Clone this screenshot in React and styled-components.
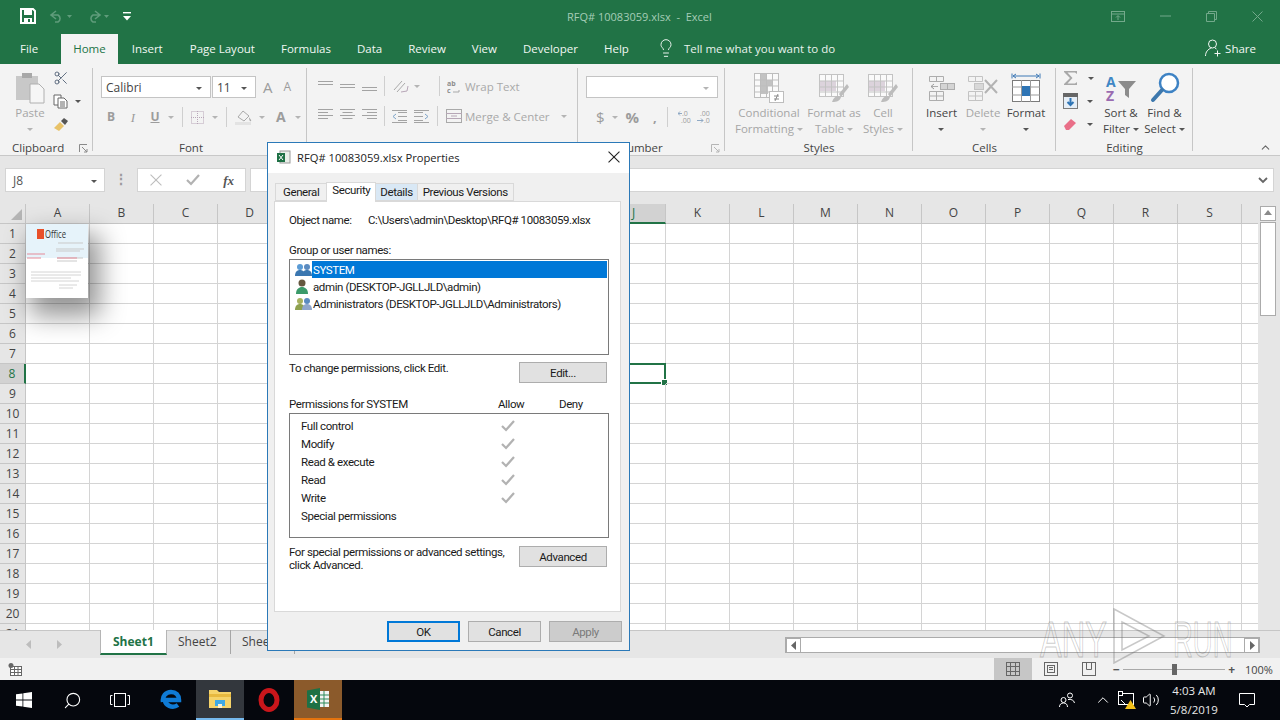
import React from "react";
import styled, { createGlobalStyle } from "styled-components";
import { Lightbulb, Scissors, Volume2, ChevronUp, Search } from "lucide-react";

const GlobalStyle = createGlobalStyle`
  html, body { margin: 0; padding: 0; width: 1280px; height: 720px; overflow: hidden; }
  body { font-family: "Open Sans", "Liberation Sans", sans-serif; font-size: 12px; color: #444; }
  * { box-sizing: border-box; }
`;

const Page = styled.div`
  position: relative;
  width: 1280px;
  height: 720px;
  display: flex;
  flex-direction: column;
  overflow: hidden;
  background: #e6e6e6;
`;

const TitleBar = styled.div`
  height: 32px;
  background: #217346;
  display: flex;
  align-items: center;
  padding-left: 20px;
  position: relative;
`;

const Qat = styled.div`
  display: flex;
  align-items: center;
  gap: 13px;
  width: 520px;
`;

const DocTitle = styled.div`
  width: 320px;
  padding-left: 27px;
  color: #a5cdb6;
  font-size: 11px;
  white-space: pre;
`;

const WinButtons = styled.div`
  margin-left: auto;
  display: flex;
  align-items: center;
  gap: 35px;
  padding-right: 17px;
`;

const TabBar = styled.div`
  height: 32px;
  background: #217346;
  display: flex;
  align-items: flex-end;
  padding-left: 4px;
  color: #fff;
  font-size: 11.5px;
`;

const Tab = styled.div`
  height: 30px;
  display: flex;
  align-items: center;
  padding: 0 ${(p) => p.$pad || 13}px 2px;
  margin-right: ${(p) => p.$mr || 0}px;
  background: ${(p) => (p.$active ? "#f3f3f3" : "transparent")};
  color: ${(p) => (p.$active ? "#217346" : "#f1f7f3")};
  white-space: nowrap;
`;

const TellMe = styled.div`
  display: flex;
  align-items: center;
  gap: 8px;
  height: 30px;
  padding: 0 0 2px 14px;
  color: #e8f2ec;
  white-space: nowrap;
`;

const Share = styled.div`
  margin-left: auto;
  display: flex;
  align-items: center;
  gap: 4px;
  height: 30px;
  padding: 0 24px 2px 0;
  color: #f1f7f3;
`;

const Ribbon = styled.div`
  height: 92px;
  background: #f3f3f3;
  border-bottom: 1px solid #c8c8c8;
  display: flex;
  position: relative;
`;

const Group = styled.div`
  width: ${(p) => p.$w}px;
  flex: none;
  display: flex;
  flex-direction: column;
  position: relative;
  padding-top: 6px;
  &::after {
    content: "";
    position: absolute;
    right: 0;
    top: 4px;
    bottom: 4px;
    width: 1px;
    background: ${(p) => (p.$last ? "transparent" : "#c6c6c6")};
  }
`;

const GroupBody = styled.div`
  flex: 1;
  display: flex;
  padding-left: ${(p) => p.$pl || 0}px;
  min-height: 0;
`;

const GroupLabel = styled.div`
  height: 15px;
  margin-bottom: -1px;
  line-height: 14px;
  font-size: 11.5px;
  color: #444;
  text-align: ${(p) => (p.$left ? "left" : "center")};
  padding-left: ${(p) => p.$pl || 0}px;
  padding-right: ${(p) => p.$pr || 0}px;
  position: relative;
`;

const Launcher = styled.svg`
  position: absolute;
  right: ${(p) => p.$r || 3}px;
  top: 3px;
`;

const Large = styled.div`
  width: ${(p) => p.$w}px;
  flex: none;
  display: flex;
  flex-direction: column;
  align-items: center;
  color: ${(p) => (p.$dim ? "#a6a6a6" : "#444")};
`;

const LargeIcon = styled.div`
  height: 35px;
  display: flex;
  align-items: center;
  justify-content: center;
`;

const LargeText = styled.div`
  font-size: 11.5px;
  line-height: 16px;
  text-align: center;
  white-space: nowrap;
`;

const Caret = styled.span`
  display: inline-block;
  width: 0;
  height: 0;
  border-left: 3px solid transparent;
  border-right: 3px solid transparent;
  border-top: 3px solid ${(p) => (p.$dim ? "#b4b4b4" : "#555")};
  margin-left: ${(p) => p.$ml ?? 3}px;
  margin-right: ${(p) => p.$mr ?? 0}px;
  vertical-align: middle;
`;

const SmallCol = styled.div`
  width: ${(p) => p.$w}px;
  flex: none;
  display: flex;
  flex-direction: column;
  gap: 3px;
  margin-top: -2px;
  padding-left: ${(p) => p.$pl || 0}px;
`;

const IconRow = styled.div`
  display: flex;
  align-items: center;
  gap: ${(p) => p.$gap ?? 4}px;
  height: ${(p) => p.$h || 20}px;
  margin-top: ${(p) => p.$mt || 0}px;
  color: ${(p) => (p.$dim ? "#a9a9a9" : "#444")};
  white-space: nowrap;
  font-size: 11.5px;
`;

const Combo = styled.div`
  width: ${(p) => p.$w}px;
  height: 22px;
  flex: none;
  background: #fff;
  border: 1px solid #c4c4c4;
  margin-left: ${(p) => p.$ml ?? 0}px;
  display: flex;
  align-items: center;
  padding: 0 4px;
  font-size: 12px;
  color: #444;
  span:last-child { margin-left: auto; margin-right: 2px; }
`;

const Divider = styled.div`
  width: 1px;
  height: ${(p) => p.$h || 20}px;
  flex: none;
  background: #cfcfcf;
  margin: 0 ${(p) => p.$m ?? 4}px;
`;

const Spacer = styled.span`
  width: ${(p) => p.$w}px;
  flex: none;
`;

const StackV = styled.div`
  display: flex;
  flex-direction: column;
  flex: 1;
  padding-top: 6px;
`;

const Glyph = styled.span`
  font-size: ${(p) => p.$s || 14}px;
  font-weight: ${(p) => p.$w || 400};
  font-style: ${(p) => (p.$i ? "italic" : "normal")};
  text-decoration: ${(p) => (p.$u ? "underline" : "none")};
  color: ${(p) => p.$c || "#9c9c9c"};
  font-family: ${(p) => (p.$serif ? '"Liberation Serif", serif' : '"Open Sans", sans-serif')};
  line-height: 1;
  width: ${(p) => (p.$box ? `${p.$box}px` : "auto")};
  margin-left: ${(p) => p.$ml || 0}px;
  text-align: center;
  flex: none;
`;

const FormulaBar = styled.div`
  height: 48px;
  background: #e6e6e6;
  display: flex;
  align-items: flex-start;
  padding: 12px 6px 0 5px;
`;

const NameBox = styled.div`
  width: 100px;
  height: 24px;
  background: #fff;
  border: 1px solid #d4d4d4;
  display: flex;
  align-items: center;
  padding: 0 7px;
  font-size: 12px;
  color: #555;
  span { margin-left: auto; }
`;

const Grip = styled.div`
  width: 32px;
  text-align: center;
  color: #9b9b9b;
  font-size: 14px;
  line-height: 22px;
  font-weight: 700;
`;

const FxBox = styled.div`
  width: 109px;
  height: 24px;
  background: #fff;
  border: 1px solid #d4d4d4;
  display: flex;
  align-items: center;
  justify-content: space-between;
  padding: 0 11px 0 12px;
`;

const FormulaInput = styled.div`
  flex: 1;
  height: 24px;
  margin-left: 4px;
  background: #fff;
  border: 1px solid #d4d4d4;
  display: flex;
  align-items: center;
  justify-content: flex-end;
  padding-right: 5px;
`;

const SheetArea = styled.div`
  height: 426px;
  display: flex;
  background: #fff;
`;

const Cells = styled.div`
  width: 1258px;
  overflow: hidden;
`;

const GridRow = styled.div`
  display: flex;
  height: 20px;
`;

const Corner = styled.div`
  width: 26px;
  flex: none;
  background: #e6e6e6;
  border-right: 1px solid #c6c6c6;
  border-bottom: 1px solid #c6c6c6;
  position: relative;
  &::after {
    content: "";
    position: absolute;
    right: 3px;
    bottom: 3px;
    border-left: 11px solid transparent;
    border-bottom: 11px solid #b5b5b5;
  }
`;

const ColHead = styled.div`
  width: 64px;
  flex: none;
  background: ${(p) => (p.$on ? "#d2d2d2" : "#e6e6e6")};
  border-right: 1px solid #c6c6c6;
  border-bottom: ${(p) => (p.$on ? "2px solid #217346" : "1px solid #c6c6c6")};
  color: ${(p) => (p.$on ? "#217346" : "#444")};
  text-align: center;
  line-height: 18px;
  font-size: 12px;
`;

const RowHead = styled.div`
  width: 26px;
  flex: none;
  background: ${(p) => (p.$on ? "#d2d2d2" : "#e6e6e6")};
  border-right: ${(p) => (p.$on ? "2px solid #217346" : "1px solid #c6c6c6")};
  border-bottom: 1px solid #c6c6c6;
  color: ${(p) => (p.$on ? "#217346" : "#444")};
  text-align: center;
  line-height: 19px;
  font-size: 12px;
`;

const Cell = styled.div`
  width: 64px;
  flex: none;
  border-right: 1px solid #d4d4d4;
  border-bottom: 1px solid #d4d4d4;
  position: relative;
  ${(p) =>
    p.$selected &&
    `
    &::before {
      content: "";
      position: absolute;
      inset: -1px;
      border: 2px solid #217346;
    }
    &::after {
      content: "";
      position: absolute;
      right: -3px;
      bottom: -3px;
      width: 5px;
      height: 5px;
      background: #217346;
      border: 1px solid #fff;
    }
  `}
`;

const VScroll = styled.div`
  width: 22px;
  flex: none;
  background: #e6e6e6;
  padding: 2px 2px 0 2px;
  display: flex;
  flex-direction: column;
  height: 100%;
`;

const ScrollBtn = styled.div`
  width: ${(p) => p.$w || 16}px;
  height: 15px;
  flex: none;
  background: #fff;
  border: 1px solid #ababab;
  display: flex;
  align-items: center;
  justify-content: center;
`;

const VThumb = styled.div`
  width: 16px;
  height: 94px;
  background: #fff;
  border: 1px solid #ababab;
  margin-top: 1px;
`;

const VFill = styled.div`
  flex: 1;
`;

const SheetBar = styled.div`
  height: 28px;
  background: #e6e6e6;
  border-top: 1px solid #c6c6c6;
  display: flex;
  align-items: flex-start;
  position: relative;
`;

const SheetNav = styled.div`
  width: 100px;
  height: 26px;
  display: flex;
  align-items: center;
  gap: 22px;
  padding-left: 25px;
`;

const SheetTab = styled.div`
  width: ${(p) => p.$w}px;
  height: ${(p) => (p.$active ? 25 : 24)}px;
  background: ${(p) => (p.$active ? "#fff" : "transparent")};
  border-left: ${(p) => (p.$active ? "1px solid #b5b5b5" : "none")};
  border-right: 1px solid ${(p) => (p.$active ? "#b5b5b5" : "#a6a6a6")};
  border-bottom: ${(p) => (p.$active ? "2px solid #217346" : "none")};
  color: ${(p) => (p.$active ? "#217346" : "#444")};
  font-weight: ${(p) => (p.$active ? 700 : 400)};
  font-size: 12px;
  line-height: 24px;
  padding-left: ${(p) => (p.$active ? 12 : 11)}px;
  margin-top: -1px;
  white-space: nowrap;
  overflow: hidden;
`;

const HScroll = styled.div`
  position: absolute;
  left: 785px;
  top: 6px;
  width: 475px;
  height: 16px;
  background: #fff;
  border: 1px solid #ababab;
  display: flex;
  justify-content: space-between;
`;

const StatusBar = styled.div`
  height: 22px;
  background: #f1f1f1;
  display: flex;
  align-items: center;
  padding-left: 8px;
`;

const ViewButtons = styled.div`
  margin-left: auto;
  display: flex;
  height: 100%;
  align-items: center;
`;

const ViewBtn = styled.div`
  width: 38px;
  height: 22px;
  display: flex;
  align-items: center;
  justify-content: center;
  background: ${(p) => (p.$on ? "#c6c6c6" : "transparent")};
`;

const ZoomBar = styled.div`
  width: 125px;
  margin-left: 3px;
  padding: 0 1px 0 2px;
  display: flex;
  align-items: center;
  color: #555;
  font-weight: 700;
`;

const ZoomTrack = styled.div`
  flex: 1;
  height: 1px;
  margin: 0 3px;
  background: #a9a9a9;
  position: relative;
`;

const ZoomThumb = styled.div`
  position: absolute;
  left: 49px;
  top: -5px;
  width: 5px;
  height: 11px;
  background: #666;
`;

const ZoomValue = styled.div`
  width: 44px;
  padding-left: 9px;
  font-size: 11px;
  color: #444;
`;

const Taskbar = styled.div`
  height: 40px;
  background: #05070d;
  display: flex;
  color: #fff;
`;

const TaskSlot = styled.div`
  width: ${(p) => p.$w || 48}px;
  margin-left: ${(p) => p.$ml || 0}px;
  height: 40px;
  flex: none;
  display: flex;
  align-items: center;
  justify-content: center;
  background: ${(p) => p.$bg || "transparent"};
  border-bottom: ${(p) => (p.$line ? `2px solid ${p.$line}` : "none")};
`;

const Tray = styled.div`
  margin-left: auto;
  display: flex;
  align-items: center;
  padding-right: 18px;
`;

const Clock = styled.div`
  width: 66px;
  margin-left: -2px;
  text-align: center;
  font-size: 11.5px;
  line-height: 19px;
  color: #e8e8e8;
`;

const Thumb = styled.svg`
  position: absolute;
  left: 26px;
  top: 224px;
  box-shadow: 8px 14px 26px 4px rgba(0, 0, 0, 0.42);
`;

const Watermark = styled.div`
  position: absolute;
  left: 1040px;
  top: 610px;
  width: 200px;
  height: 60px;
  display: flex;
  align-items: center;
  font-family: "Liberation Sans", sans-serif;
  font-size: 50px;
  color: transparent;
  -webkit-text-stroke: 1px rgba(110, 110, 110, 0.38);
  pointer-events: none;
  line-height: 60px;
`;

const WatermarkWord = styled.span`
  display: block;
  width: ${(p) => p.$w}px;
  flex: none;
  transform: scaleX(${(p) => p.$sx});
  transform-origin: left center;
`;

const WatermarkPlay = styled.svg`
  flex: none;
  margin: -8px 5px 0 0;
`;

const Dialog = styled.div`
  position: absolute;
  left: 267px;
  top: 142px;
  width: 363px;
  height: 509px;
  background: #f0f0f0;
  border: 1px solid #2b79b8;
  display: flex;
  flex-direction: column;
  font-family: Roboto, "Liberation Sans", sans-serif;
  font-size: 11.5px;
  letter-spacing: -0.4px;
  color: #1a1a1a;
`;

const DialogTitle = styled.div`
  height: 30px;
  background: #fff;
  display: flex;
  align-items: center;
  gap: 6px;
  padding: 0 9px 2px;
  flex: none;
  font-family: "Open Sans", sans-serif;
  letter-spacing: 0;
  font-size: 11.2px;
  color: #222;
  svg:last-child { margin-left: auto; }
`;

const DialogTabs = styled.div`
  height: 28px;
  padding: 10px 0 0 7px;
  display: flex;
  align-items: flex-end;
  flex: none;
`;

const DialogTab = styled.div`
  height: ${(p) => (p.$active ? 20 : 18)}px;
  padding: 0 ${(p) => p.$pad || 4}px;
  margin-left: ${(p) => (p.$first ? 0 : -1)}px;
  background: ${(p) => (p.$active ? "#fff" : p.$hover ? "#d9e8f5" : "#f0f0f0")};
  border: 1px solid #d9d9d9;
  border-bottom: ${(p) => (p.$active ? "none" : "1px solid #d9d9d9")};
  line-height: ${(p) => (p.$active ? 15 : 17)}px;
  position: relative;
  z-index: ${(p) => (p.$active ? 1 : 0)};
  margin-bottom: ${(p) => (p.$active ? -1 : 0)}px;
`;

const Panel = styled.div`
  width: 347px;
  height: 411px;
  margin-left: 6px;
  background: #fff;
  border: 1px solid #d9d9d9;
  padding: 11px 14px 0 14px;
  flex: none;
`;

const LineText = styled.div`
  display: flex;
  height: 15px;
  line-height: 15px;
  margin-top: ${(p) => p.$mt || 0}px;
  white-space: nowrap;
`;

const ObjectLabel = styled.div`
  width: 79px;
  flex: none;
`;

const ListBox = styled.div`
  width: 320px;
  height: ${(p) => p.$h}px;
  border: 1px solid #7a7a7a;
  padding: ${(p) => p.$pad || "1px"};
  margin-top: ${(p) => p.$mt || 0}px;
  background: #fff;
`;

const UserRow = styled.div`
  height: 17px;
  display: flex;
  align-items: center;
  padding-left: 4px;
  white-space: nowrap;
  color: #1a1a1a;
`;

const UserName = styled.span`
  flex: 1;
  height: 17px;
  line-height: 18px;
  padding-left: 1px;
  background: ${(p) => (p.$sel ? "#0078d7" : "transparent")};
  color: ${(p) => (p.$sel ? "#fff" : "#1a1a1a")};
`;

const ActionRow = styled.div`
  display: flex;
  justify-content: space-between;
  align-items: flex-start;
  width: 318px;
  margin-top: ${(p) => p.$mt || 0}px;
`;

const ActionText = styled.div`
  line-height: 13px;
  white-space: nowrap;
`;

const Btn = styled.div`
  width: ${(p) => p.$w || 73}px;
  height: ${(p) => p.$h || 21}px;
  background: ${(p) => (p.$disabled ? "#cccccc" : "#e1e1e1")};
  border: ${(p) => (p.$primary ? "2px solid #0078d7" : "1px solid #adadad")};
  color: ${(p) => (p.$disabled ? "#7a7a7a" : "#1a1a1a")};
  display: flex;
  align-items: center;
  justify-content: center;
  flex: none;
`;

const PermHead = styled.div`
  display: grid;
  grid-template-columns: 209px 61px auto;
  height: 15px;
  line-height: 15px;
  margin-top: 14px;
`;

const PermRow = styled.div`
  display: grid;
  grid-template-columns: 200px 20px;
  height: 18px;
  align-items: center;
  padding-left: 11px;
`;

const DialogFoot = styled.div`
  display: flex;
  justify-content: flex-end;
  gap: 8px;
  padding: 9px 7px 0 0;
`;

const Arrow = ({ dir = "right", c = "#8a8a8a" }) => (
  <svg width="8" height="9" viewBox="0 0 8 9">
    <path d={dir === "right" ? "M2 0l5 4.5L2 9z" : dir === "left" ? "M6 0L1 4.5 6 9z" : dir === "up" ? "M0 6l4-5 4 5z" : "M0 2l4 5 4-5z"} fill={c} />
  </svg>
);

const SaveIcon = () => (
  <svg width="16" height="16" viewBox="0 0 16 16">
    <path d="M1 1h12l2 2v12H1z" fill="none" stroke="#fff" strokeWidth="2" />
    <rect x="4" y="2" width="8" height="5" fill="#fff" />
    <rect x="4" y="10" width="8" height="5" fill="#fff" />
    <rect x="8" y="11" width="2" height="3" fill="#217346" />
  </svg>
);

const UndoIcon = ({ redo }) => (
  <svg width="24" height="14" viewBox="0 0 24 14">
    <path d={redo ? "M9 2l5 4-5 4M14 6H7a4 4 0 0 0 0 7h3" : "M7 2L2 6l5 4M2 6h7a4 4 0 0 1 0 7H6"} fill="none" stroke="#5f9c7b" strokeWidth="1.6" />
    <path d="M18 6h5l-2.5 3z" fill="#5f9c7b" />
  </svg>
);

const CustomizeIcon = () => (
  <svg width="8" height="9" viewBox="0 0 8 9">
    <rect x="0" y="0" width="8" height="1.4" fill="#fff" />
    <path d="M0 4h8L4 8.500z" fill="#fff" />
  </svg>
);

const ShareIcon = () => (
  <svg width="16" height="18" viewBox="0 0 16 18" fill="none" stroke="#f1f7f3">
    <circle cx="7.500" cy="5" r="4" />
    <path d="M0.500 17c0-4 2.500-7 6-8M10 9l1.500 1M12.500 11.500v6M9.500 14.500h6" />
  </svg>
);

const RibbonDisplayIcon = () => (
  <svg width="14" height="11" viewBox="0 0 14 11" fill="none" stroke="#73a98b">
    <rect x="0.5" y="0.5" width="13" height="10" />
    <path d="M0.5 3h13M7 9V5M5 6.500L7 4.500l2 2" />
  </svg>
);

const MinIcon = () => (
  <svg width="11" height="2" viewBox="0 0 11 2">
    <path d="M0 1h11" stroke="#73a98b" />
  </svg>
);

const RestoreIcon = () => (
  <svg width="11" height="11" viewBox="0 0 11 11" fill="none" stroke="#73a98b">
    <path d="M2.500 2.500v-2h8v8h-2M0.500 2.500h8v8h-8z" />
  </svg>
);

const CloseIcon = ({ c = "#73a98b", s = 11 }) => (
  <svg width={s} height={s} viewBox="0 0 11 11" fill="none" stroke={c}>
    <path d="M0.500 0.500l10 10M10.500 0.500l-10 10" />
  </svg>
);

const PasteIcon = () => (
  <svg width="30" height="32" viewBox="0 0 30 32">
    <rect x="1" y="4" width="22" height="24" fill="#c8c8c8" />
    <rect x="7" y="1" width="10" height="5" fill="#a8a8a8" />
    <path d="M15 12h9l5 5v14H15z" fill="#f6f6f6" stroke="#b0b0b0" />
  </svg>
);

const CopyIcon = () => (
  <svg width="15" height="15" viewBox="0 0 15 15" fill="#fff" stroke="#666">
    <path d="M1 1h7v10H1z" />
    <path d="M5 4h6l3 3v7H5z" />
    <path d="M7 8h5M7 10h5M7 12h5" fill="none" />
  </svg>
);

const BrushIcon = () => (
  <svg width="16" height="16" viewBox="0 0 16 16">
    <path d="M1 12l6-6 4 4-5 5z" fill="#e8c268" />
    <path d="M8 5l3-3 4 3-3 4z" fill="#555" />
  </svg>
);

const BordersIcon = () => (
  <svg width="13" height="13" viewBox="0 0 13 13" fill="none" stroke="#b9a7b9" strokeDasharray="1 1">
    <rect x="0.500" y="0.500" width="12" height="12" />
    <path d="M6.500 0v13M0 6.500h13" />
  </svg>
);

const FillIcon = () => (
  <svg width="18" height="16" viewBox="0 0 18 16">
    <path d="M3 8l5-6 6 5-5 5z" fill="none" stroke="#a9a9a9" />
    <path d="M14 8c1 2 3 3 2 4s-2-1-2-4z" fill="#a9a9a9" />
    <rect x="0" y="13" width="16" height="3" fill="#e3e3e3" />
  </svg>
);

const AlignLines = ({ rows = [12, 12, 12], w = 15, anchor = "left", top = 0, gap = 3 }) => (
  <svg width={w} height={14} viewBox={`0 0 ${w} 14`} stroke="#a3a3a3">
    {rows.map((r, i) => {
      const x = anchor === "left" ? 0 : anchor === "right" ? w - r : (w - r) / 2;
      return <path key={i} d={`M${x} ${top + i * gap + 0.5}h${r}`} />;
    })}
  </svg>
);

const OrientIcon = () => (
  <svg width="18" height="16" viewBox="0 0 18 16" stroke="#a9a9a9" fill="none">
    <path d="M2 12L10 3M5 14L13 5" />
    <path d="M9 14l6-1 1-5" stroke="#b7a6b7" />
  </svg>
);

const WrapIcon = () => (
  <svg width="14" height="17" viewBox="0 0 14 17">
    <text x="0" y="8" fontSize="7" fontWeight="700" fontFamily="Open Sans, sans-serif" fill="#8e8e8e">ab</text>
    <text x="0" y="15" fontSize="7" fontWeight="700" fontFamily="Open Sans, sans-serif" fill="#8e8e8e">c</text>
    <path d="M6 14h6v-2" fill="none" stroke="#a9a9a9" />
  </svg>
);

const IndentIcon = ({ flip }) => (
  <svg width="15" height="13" viewBox="0 0 15 13" stroke="#a3a3a3" fill="none" style={flip ? { transform: "scaleX(-1)" } : undefined}>
    <path d="M6 2.500h9M6 6.500h9M6 10.500h9M0 12.500h15M0 0.500h15" />
    <path d="M4 4L1 6.500 4 9" stroke="#7fa4c8" />
  </svg>
);

const MergeIcon = () => (
  <svg width="16" height="14" viewBox="0 0 16 14" fill="none" stroke="#a9a9a9">
    <rect x="0.500" y="0.500" width="15" height="13" />
    <path d="M0 4.500h16M0 9.500h16M5 7h6" stroke="#b6a6b6" />
  </svg>
);

const DecimalIcon = ({ more }) => (
  <svg width="15" height="15" viewBox="0 0 15 15">
    <text x={more ? 3 : 4} y="6" fontSize="7" fontFamily="Open Sans, sans-serif" fill="#9c9c9c">{more ? ".00" : ".0"}</text>
    <text x={more ? 7 : 3} y="13" fontSize="7" fontFamily="Open Sans, sans-serif" fill="#9c9c9c">{more ? ".0" : ".00"}</text>
    <path d={more ? "M0 10.500h6M4 8.500l2 2-2 2" : "M0 3.500h4M2 1.500l-2 2 2 2"} fill="none" stroke="#8fa9c4" />
  </svg>
);

const CondFmtIcon = () => (
  <svg width="32" height="32" viewBox="0 0 32 32" fill="none" stroke="#bdbdbd">
    <rect x="1.500" y="1.500" width="24" height="24" fill="#fafafa" />
    <rect x="7" y="2" width="6" height="9" fill="#c2c2c2" stroke="none" />
    <rect x="7" y="8" width="12" height="6" fill="#c2c2c2" stroke="none" />
    <rect x="7" y="14" width="8" height="8" fill="#c2c2c2" stroke="none" />
    <path d="M1 8h25M1 14h25M1 20h25M7.500 1v25M13.500 1v25M19.500 1v25" />
    <rect x="16.500" y="19.500" width="14" height="11" fill="#fff" />
    <path d="M21 24h5M21 27h5M25 22l-3 7" stroke="#8c8c8c" />
  </svg>
);

const TableFmtIcon = () => (
  <svg width="32" height="30" viewBox="0 0 32 30" fill="none" stroke="#c3c3c3">
    <rect x="1.500" y="1.500" width="24" height="22" fill="#fafafa" />
    <rect x="2" y="8" width="16" height="10" fill="#dcd3dc" stroke="none" />
    <path d="M1 8h25M1 14h25M1 19h25M7.500 1v23M13.500 1v23M19.500 1v23" />
    <path d="M29 11l-8 10 2 3 8-10z" fill="#bcbcbc" stroke="none" />
    <path d="M14 29c2-6 6-7 9-5-1 4-4 5-9 5z" fill="#bcbcbc" stroke="none" />
  </svg>
);

const InsertCellsIcon = () => (
  <svg width="28" height="28" viewBox="0 0 28 28" fill="none" stroke="#adadad">
    <path d="M1.500 2.500h14v5h-14zM8.500 2v5M1.500 17.500h14v9h-14zM1 22h15M8.500 17v9" />
    <rect x="12.500" y="9.500" width="14" height="6" fill="#d4d4d4" />
    <path d="M19.500 9v6M10 12.500H3" />
    <path d="M6 10l-3 2.500 3 2.500" stroke="#999" />
  </svg>
);

const DeleteCellsIcon = () => (
  <svg width="32" height="28" viewBox="0 0 32 28" fill="none" stroke="#c3c3c3">
    <path d="M1.500 2.500h14v5h-14zM8.500 2v5M1.500 17.500h14v9h-14zM1 22h15M8.500 17v9" />
    <rect x="7.500" y="9.500" width="9" height="6" fill="#d8d8d8" />
    <path d="M18 6l12 13M30 6L18 19" stroke="#b3b3b3" strokeWidth="2" />
  </svg>
);

const FormatCellsIcon = () => (
  <svg width="30" height="32" viewBox="0 0 30 32" fill="none">
    <path d="M1 1.500v5M29 1.500v5M2 4h26" stroke="#3d78b5" />
    <path d="M5 2L2 4l3 2M25 2l3 2-3 2" stroke="#3d78b5" />
    <rect x="1.500" y="8.500" width="27" height="21" fill="#fff" stroke="#7b7b7b" />
    <path d="M1 15h28M1 23h28M10.500 8v22M19.500 8v22" stroke="#9b9b9b" />
    <rect x="11" y="14" width="8" height="10" fill="#2f75b5" />
  </svg>
);

const SumIcon = () => (
  <svg width="16" height="16" viewBox="0 0 16 16">
    <path d="M1 1h13v3L12 2.500H4.500l5 5.500-5 5.500H12l2-1.500v3H1v-1l6-6-6-6z" fill="#a8a8a8" />
  </svg>
);

const FillDownIcon = () => (
  <svg width="15" height="16" viewBox="0 0 15 16">
    <rect x="0.500" y="0.500" width="14" height="15" fill="#e5eef7" stroke="#7b7b7b" />
    <rect x="0" y="0" width="15" height="4" fill="#666" />
    <path d="M7.500 5v7M4.500 9l3 3 3-3" stroke="#2f75b5" strokeWidth="2" fill="none" />
  </svg>
);

const EraserIcon = () => (
  <svg width="14" height="14" viewBox="0 0 14 14">
    <path d="M1 9l7-7 5 4-7 7H3z" fill="#e96f88" />
  </svg>
);

const SortIcon = () => (
  <svg width="32" height="32" viewBox="0 0 32 32">
    <text x="1" y="15" fontSize="14" fontWeight="700" fontFamily="Open Sans, sans-serif" fill="#3f87c5">A</text>
    <text x="1" y="29" fontSize="14" fontWeight="700" fontFamily="Open Sans, sans-serif" fill="#9a6bb0">Z</text>
    <path d="M13 9h18l-7 8v9l-4-3v-6z" fill="#8c8c8c" />
  </svg>
);

const FindIcon = () => (
  <svg width="30" height="32" viewBox="0 0 30 32" fill="none">
    <circle cx="19" cy="11" r="9" stroke="#3d82c4" strokeWidth="2.500" fill="#fff" />
    <path d="M12 18L3 28" stroke="#3d78ad" strokeWidth="4" strokeLinecap="round" />
  </svg>
);

const PeopleIcon = () => (
  <svg width="16" height="16" viewBox="0 0 16 16" fill="none" stroke="#fff">
    <circle cx="11" cy="3.500" r="2.500" />
    <circle cx="4.500" cy="8" r="2.500" />
    <path d="M0.500 15c0-2.500 1.500-4 4-4s4 1.500 4 4M9 7.500c3-.5 6 .5 6.500 3.500" />
  </svg>
);

const DesktopIcon = ({ kind }) => {
  if (kind === "start") {
    return (
      <svg width="16" height="16" viewBox="0 0 16 16" fill="#fff">
        <path d="M0 2.300l6.500-.9v6.200H0zM7.300 1.300L16 0v7.600H7.300zM0 8.400h6.500v6.200L0 13.700zM7.300 8.400H16V16l-8.700-1.300z" />
      </svg>
    );
  }
  if (kind === "task") {
    return (
      <svg width="20" height="14" viewBox="0 0 20 14" fill="none" stroke="#fff">
        <rect x="4.500" y="0.500" width="11" height="13" />
        <path d="M2.500 2.500h-2v9h2M17.500 2.500h2v9h-2" />
      </svg>
    );
  }
  if (kind === "edge") {
    return (
      <svg width="22" height="22" viewBox="0 0 22 22" fill="none">
        <path d="M3 13c-1-6 3-10 8-10 5 0 8 3 8 8H5M5 11c0 5 7 9 13 5" stroke="#0f7bd6" strokeWidth="4.500" />
      </svg>
    );
  }
  if (kind === "folder") {
    return (
      <svg width="24" height="20" viewBox="0 0 24 20">
        <path d="M1 1h8l2 2h12v16H1z" fill="#f5d36a" />
        <rect x="1" y="5" width="22" height="3" fill="#e7b93f" />
        <rect x="7" y="11" width="10" height="6" fill="#3fa9e6" />
        <rect x="10" y="15" width="4" height="4" fill="#f7f1d6" />
      </svg>
    );
  }
  if (kind === "opera") {
    return (
      <svg width="22" height="24" viewBox="0 0 22 24" fill="none">
        <ellipse cx="11" cy="12" rx="8" ry="9.500" stroke="#c9161b" strokeWidth="5" />
      </svg>
    );
  }
  return (
    <svg width="24" height="22" viewBox="0 0 24 22">
      <path d="M1 2.500L14 0v22L1 19.500z" fill="#1e7145" />
      <rect x="14" y="3" width="9" height="16" fill="#f4f4f4" />
      <path d="M14 7h9M14 11h9M14 15h9M18 3v16" stroke="#2f8b5b" />
      <text x="4" y="15" fontSize="11" fontWeight="700" fontFamily="Open Sans, sans-serif" fill="#fff">X</text>
    </svg>
  );
};

const SecurityUser = ({ kind }) => (
  <svg width="17" height="15" viewBox="0 0 17 15">
    {kind === "admin" ? (
      <>
        <circle cx="7" cy="4" r="3.500" fill="#65573f" />
        <path d="M1 15c0-5 3-7 6-7s6 2 6 7z" fill="#3b9a6a" />
      </>
    ) : (
      <>
        <circle cx="5" cy="5" r="3" fill={kind === "system" ? "#5b9bd5" : "#a7b15f"} />
        <path d="M0 14c0-4 2-6 5-6s5 2 5 6z" fill={kind === "system" ? "#3b77b0" : "#8fa14f"} />
        <circle cx="12" cy="5" r="3" fill="#5b8bc0" />
        <path d="M7 14c0-4 2-6 5-6s5 2 5 6z" fill={kind === "system" ? "#3b77b0" : "#8fa6cc"} />
      </>
    )}
  </svg>
);

const GreyCheck = () => (
  <svg width="14" height="12" viewBox="0 0 14 12" fill="none">
    <path d="M1 6l4 4 8-9" stroke="#b2b2b2" strokeWidth="2.200" />
  </svg>
);

const XlsxIcon = () => (
  <svg width="14" height="14" viewBox="0 0 14 14">
    <rect x="3" y="1" width="10" height="12" fill="#e9efe9" stroke="#9a9a9a" />
    <rect x="0" y="3" width="8" height="9" fill="#1e7145" />
    <path d="M2 5l4 5M6 5l-4 5" stroke="#fff" />
  </svg>
);

const NormalViewIcon = () => (
  <svg width="14" height="14" viewBox="0 0 14 14" fill="none" stroke="#666">
    <rect x="0.500" y="0.500" width="13" height="13" />
    <path d="M4.500 0v14M9.500 0v14M0 4.500h14M0 9.500h14" />
  </svg>
);

const PageViewIcon = () => (
  <svg width="14" height="14" viewBox="0 0 14 14" fill="none" stroke="#666">
    <rect x="0.500" y="0.500" width="13" height="13" />
    <rect x="3.500" y="3.500" width="7" height="7" />
    <path d="M5 5.500h4M5 7.500h4" />
  </svg>
);

const BreakViewIcon = () => (
  <svg width="14" height="14" viewBox="0 0 14 14" fill="none" stroke="#666">
    <rect x="0.500" y="0.500" width="13" height="13" />
    <path d="M4.500 0v7.500h5V0" />
  </svg>
);

const MacroIcon = () => (
  <svg width="14" height="13" viewBox="0 0 14 13" fill="none" stroke="#666">
    <rect x="2.500" y="3.500" width="11" height="9" fill="#fff" />
    <path d="M2 6.500h12M2 9.500h12M6.500 3v10M10 3v10" />
    <circle cx="3" cy="2.500" r="2.500" fill="#666" stroke="none" />
  </svg>
);

const NetworkIcon = () => (
  <svg width="18" height="18" viewBox="0 0 18 18" fill="none">
    <rect x="0.500" y="2.500" width="15" height="11" stroke="#fff" />
    <rect x="0.500" y="0.500" width="4" height="4" stroke="#fff" fill="#05070d" />
    <path d="M3 9l5 5" stroke="#fff" />
    <path d="M12.500 9L18 18h-11z" fill="#f3c11b" />
  </svg>
);

const NotifyIcon = () => (
  <svg width="16" height="15" viewBox="0 0 16 15" fill="none" stroke="#fff">
    <path d="M0.500 0.500h15v11h-5L8 14l-2.500-2.500h-5z" />
  </svg>
);

const ThumbPicture = () => (
  <Thumb width="62" height="74" viewBox="0 0 62 74">
    <rect width="62" height="74" fill="#fff" />
    <rect width="62" height="34" fill="#e6f3fa" />
    <rect x="11" y="5" width="7" height="10" fill="#e8502a" />
    <text x="19" y="14" fontSize="10" textLength="21" lengthAdjust="spacingAndGlyphs" fontFamily="Open Sans, sans-serif" fill="#333">Office</text>
    <path d="M32 19h25M30 25h28M30 27h24M31 34h26M31 37h20" stroke="#c9c9c9" />
    <path d="M1 30h18M1 34h14M31 34h20" stroke="#e58a98" />
    <path d="M5 48h50M5 51h50M5 54h40M5 57h48M33 61h18M33 64h14" stroke="#d4d4d4" />
  </Thumb>
);

const COLS = "ABCDEFGHIJKLMNOPQRST".split("");
const ROWS = Array.from({ length: 21 }, (_, i) => i + 1);
const PERMS = [
  ["Full control", true],
  ["Modify", true],
  ["Read & execute", true],
  ["Read", true],
  ["Write", true],
  ["Special permissions", false],
];

const App = () => (
  <Page>
    <GlobalStyle />
    <TitleBar>
      <Qat>
        <SaveIcon />
        <UndoIcon />
        <UndoIcon redo />
        <CustomizeIcon />
      </Qat>
      <DocTitle>RFQ# 10083059.xlsx  -  Excel</DocTitle>
      <WinButtons>
        <RibbonDisplayIcon />
        <MinIcon />
        <RestoreIcon />
        <CloseIcon />
      </WinButtons>
    </TitleBar>
    <TabBar>
      <Tab $pad={16} $mr={7}>File</Tab>
      <Tab $active $pad={12}>Home</Tab>
      <Tab $pad={14}>Insert</Tab>
      <Tab>Page Layout</Tab>
      <Tab>Formulas</Tab>
      <Tab>Data</Tab>
      <Tab>Review</Tab>
      <Tab>View</Tab>
      <Tab>Developer</Tab>
      <Tab>Help</Tab>
      <TellMe>
        <Lightbulb size={20} strokeWidth={1.2} />
        Tell me what you want to do
      </TellMe>
      <Share>
        <ShareIcon />
        Share
      </Share>
    </TabBar>
    <Ribbon>
      <Group $w={93}>
        <GroupBody $pl={14}>
          <Large $w={32} $dim>
            <LargeIcon><PasteIcon /></LargeIcon>
            <LargeText>Paste</LargeText>
            <LargeText><Caret $dim $ml={0} /></LargeText>
          </Large>
          <SmallCol $w={40} $pl={7}>
            <IconRow><Scissors size={16} strokeWidth={1.3} color="#4a5a70" /></IconRow>
            <IconRow><CopyIcon /><Caret /></IconRow>
            <IconRow><BrushIcon /></IconRow>
          </SmallCol>
        </GroupBody>
        <GroupLabel $left $pl={12}>
          Clipboard
          <Launcher $r={5} width="9" height="9" viewBox="0 0 9 9" fill="none" stroke="#8a8a8a"><path d="M0.500 8V0.500H8M3 3l5 5M8 5v3H5" /></Launcher>
        </GroupLabel>
      </Group>
      <Group $w={214}>
        <GroupBody $pl={8}>
          <StackV>
            <IconRow $h={22} $gap={0}>
              <Combo $w={110}>Calibri<span><Caret /></span></Combo>
              <Combo $w={44} $ml={1}>11<span><Caret /></span></Combo>
              <Glyph $s={15} $ml={7}>A</Glyph>
              <Glyph $s={12} $ml={11}>A</Glyph>
            </IconRow>
            <IconRow $h={20} $mt={9} $gap={0}>
              <Glyph $s={12} $w={700} $box={20}>B</Glyph>
              <Glyph $s={13} $i $serif $box={24}>I</Glyph>
              <Glyph $s={12} $w={700} $u $box={20}>U</Glyph>
              <Caret $dim $ml={3} />
              <Divider $m={8} />
              <BordersIcon />
              <Caret $dim $ml={8} />
              <Divider $m={8} />
              <FillIcon />
              <Caret $dim $ml={6} />
              <Glyph $s={14} $w={700} $ml={11}>A</Glyph>
              <Caret $dim $ml={9} />
            </IconRow>
          </StackV>
        </GroupBody>
        <GroupLabel $pr={18}>Font</GroupLabel>
      </Group>
      <Group $w={271}>
        <GroupBody $pl={11}>
          <StackV>
            <IconRow $h={20} $gap={7}>
              <AlignLines rows={[15, 15]} top={2} />
              <AlignLines rows={[15, 15]} top={5} />
              <AlignLines rows={[15, 15]} top={8} />
              <Divider $m={0} />
              <OrientIcon />
              <Caret $dim $ml={-3} $mr={12} />
              <Divider $m={0} />
              <IconRow $dim $gap={4}>
                <WrapIcon />
                Wrap Text
              </IconRow>
            </IconRow>
            <IconRow $h={20} $mt={10} $gap={7}>
              <AlignLines rows={[15, 10, 15, 10]} />
              <AlignLines rows={[15, 10, 15, 10]} anchor="center" />
              <AlignLines rows={[15, 10, 15, 10]} anchor="right" />
              <Divider $m={0} />
              <IndentIcon />
              <IndentIcon flip />
              <Divider $m={1} />
              <IconRow $dim $gap={3}>
                <MergeIcon />
                Merge & Center
                <Caret $dim $ml={8} />
              </IconRow>
            </IconRow>
          </StackV>
        </GroupBody>
        <GroupLabel>Alignment</GroupLabel>
      </Group>
      <Group $w={147}>
        <GroupBody $pl={8}>
          <StackV>
            <Combo $w={132}><span><Caret $dim /></span></Combo>
            <IconRow $h={20} $mt={9} $gap={0}>
              <Glyph $s={15} $ml={10}>$</Glyph>
              <Caret $dim $ml={7} />
              <Glyph $s={15} $w={700} $ml={8}>%</Glyph>
              <Glyph $s={13} $w={700} $ml={14}>,</Glyph>
              <Divider $m={10} />
              <DecimalIcon />
              <Spacer $w={4} />
              <DecimalIcon more />
            </IconRow>
          </StackV>
        </GroupBody>
        <GroupLabel $pr={22}>Number
          <Launcher $r={5} width="9" height="9" viewBox="0 0 9 9" fill="none" stroke="#b5b5b5"><path d="M0.500 8V0.500H8M3 3l5 5M8 5v3H5" /></Launcher>
        </GroupLabel>
      </Group>
      <Group $w={188}>
        <GroupBody $pl={4}>
          <Large $w={80} $dim>
            <LargeIcon><CondFmtIcon /></LargeIcon>
            <LargeText>Conditional<br />Formatting<Caret $dim /></LargeText>
          </Large>
          <Large $w={50} $dim>
            <LargeIcon><TableFmtIcon /></LargeIcon>
            <LargeText>Format as<br />Table<Caret $dim /></LargeText>
          </Large>
          <Large $w={48} $dim>
            <LargeIcon><TableFmtIcon /></LargeIcon>
            <LargeText>Cell<br />Styles<Caret $dim /></LargeText>
          </Large>
        </GroupBody>
        <GroupLabel>Styles</GroupLabel>
      </Group>
      <Group $w={143}>
        <GroupBody $pl={8}>
          <Large $w={41}>
            <LargeIcon><InsertCellsIcon /></LargeIcon>
            <LargeText>Insert<br /><Caret $ml={0} /></LargeText>
          </Large>
          <Large $w={42} $dim>
            <LargeIcon><DeleteCellsIcon /></LargeIcon>
            <LargeText>Delete<br /><Caret $dim $ml={0} /></LargeText>
          </Large>
          <Large $w={44}>
            <LargeIcon><FormatCellsIcon /></LargeIcon>
            <LargeText>Format<br /><Caret $ml={0} /></LargeText>
          </Large>
        </GroupBody>
        <GroupLabel>Cells</GroupLabel>
      </Group>
      <Group $w={137}>
        <GroupBody $pl={7}>
          <SmallCol $w={35}>
            <IconRow $gap={6}><SumIcon /><Caret /></IconRow>
            <IconRow $gap={6}><FillDownIcon /><Caret /></IconRow>
            <IconRow $gap={7}><EraserIcon /><Caret /></IconRow>
          </SmallCol>
          <Large $w={46}>
            <LargeIcon><SortIcon /></LargeIcon>
            <LargeText>Sort &<br />Filter<Caret /></LargeText>
          </Large>
          <Large $w={41}>
            <LargeIcon><FindIcon /></LargeIcon>
            <LargeText>Find &<br />Select<Caret /></LargeText>
          </Large>
        </GroupBody>
        <GroupLabel>Editing</GroupLabel>
      </Group>
      <Group $w={87} $last>
        <GroupBody />
        <GroupLabel $left $pl={66}><ChevronUp size={13} strokeWidth={2} color="#666" /></GroupLabel>
      </Group>
    </Ribbon>
    <FormulaBar>
      <NameBox>J8<span><Caret /></span></NameBox>
      <Grip>⋮</Grip>
      <FxBox>
        <CloseIcon c="#bdbdbd" s={12} />
        <GreyCheck />
        <Glyph $s={13} $i $serif $c="#555" $w={700}>fx</Glyph>
      </FxBox>
      <FormulaInput>
        <svg width="10" height="7" viewBox="0 0 10 7" fill="none" stroke="#666" strokeWidth="1.800"><path d="M1 1l4 4 4-4" /></svg>
      </FormulaInput>
    </FormulaBar>
    <SheetArea>
      <Cells>
        <GridRow>
          <Corner />
          {COLS.map((c) => (
            <ColHead key={c} $on={c === "J"}>{c}</ColHead>
          ))}
        </GridRow>
        {ROWS.map((r) => (
          <GridRow key={r}>
            <RowHead $on={r === 8}>{r}</RowHead>
            {COLS.map((c) => (
              <Cell key={c} $selected={c === "J" && r === 8} />
            ))}
          </GridRow>
        ))}
      </Cells>
      <VScroll>
        <ScrollBtn><Arrow dir="up" /></ScrollBtn>
        <VThumb />
        <VFill />
      </VScroll>
    </SheetArea>
    <SheetBar>
      <SheetNav>
        <Arrow dir="left" c="#bdbdbd" />
        <Arrow c="#bdbdbd" />
      </SheetNav>
      <SheetTab $active $w={67}>Sheet1</SheetTab>
      <SheetTab $w={64}>Sheet2</SheetTab>
      <SheetTab $w={64}>Sheet3</SheetTab>
      <HScroll>
        <ScrollBtn $w={15}><Arrow dir="left" c="#666" /></ScrollBtn>
        <ScrollBtn $w={15}><Arrow c="#666" /></ScrollBtn>
      </HScroll>
    </SheetBar>
    <StatusBar>
      <MacroIcon />
      <ViewButtons>
        <ViewBtn $on><NormalViewIcon /></ViewBtn>
        <ViewBtn><PageViewIcon /></ViewBtn>
        <ViewBtn><BreakViewIcon /></ViewBtn>
        <ZoomBar>
          −<ZoomTrack><ZoomThumb /></ZoomTrack>+
        </ZoomBar>
        <ZoomValue>100%</ZoomValue>
      </ViewButtons>
    </StatusBar>
    <Taskbar>
      <TaskSlot><DesktopIcon kind="start" /></TaskSlot>
      <TaskSlot><Search size={19} strokeWidth={1.4} style={{ transform: "scaleX(-1)" }} /></TaskSlot>
      <TaskSlot><DesktopIcon kind="task" /></TaskSlot>
      <TaskSlot $ml={3}><DesktopIcon kind="edge" /></TaskSlot>
      <TaskSlot $ml={1} $bg="#33373d" $line="#76b9ed"><DesktopIcon kind="folder" /></TaskSlot>
      <TaskSlot $ml={1}><DesktopIcon kind="opera" /></TaskSlot>
      <TaskSlot $ml={1} $bg="#8b5a2b" $line="#e3730e"><DesktopIcon kind="excel" /></TaskSlot>
      <Tray>
        <TaskSlot $w={24}><PeopleIcon /></TaskSlot>
        <TaskSlot $w={24} $ml={12}><ChevronUp size={18} strokeWidth={1.3} /></TaskSlot>
        <TaskSlot $w={24}><NetworkIcon /></TaskSlot>
        <TaskSlot $w={24}><Volume2 size={18} strokeWidth={1.3} /></TaskSlot>
        <Clock>4:03 AM<br />5/8/2019</Clock>
        <TaskSlot $w={30} $ml={5}><NotifyIcon /></TaskSlot>
      </Tray>
    </Taskbar>

    <ThumbPicture />
    <Watermark>
      <WatermarkWord $w={72} $sx={0.65}>ANY</WatermarkWord>
      <WatermarkPlay width="56" height="56" viewBox="0 0 56 56" fill="none" stroke="rgba(110,110,110,0.38)" strokeWidth="1.500">
        <path d="M2 1l50 27L2 55z" />
        <path d="M10 14l27 14-27 14z" />
      </WatermarkPlay>
      <WatermarkWord $w={60} $sx={0.55}>RUN</WatermarkWord>
    </Watermark>

    <Dialog>
      <DialogTitle>
        <XlsxIcon />
        RFQ# 10083059.xlsx Properties
        <CloseIcon c="#222" s={12} />
      </DialogTitle>
      <DialogTabs>
        <DialogTab $first $pad={7}>General</DialogTab>
        <DialogTab $active $pad={5}>Security</DialogTab>
        <DialogTab $hover $pad={4}>Details</DialogTab>
        <DialogTab $pad={5}>Previous Versions</DialogTab>
      </DialogTabs>
      <Panel>
        <LineText>
          <ObjectLabel>Object name:</ObjectLabel>
          C:\Users\admin\Desktop\RFQ# 10083059.xlsx
        </LineText>
        <LineText $mt={15}>Group or user names:</LineText>
        <ListBox $h={96} $mt={1}>
          <UserRow><SecurityUser kind="system" /><UserName $sel>SYSTEM</UserName></UserRow>
          <UserRow><SecurityUser kind="admin" /><UserName>admin (DESKTOP-JGLLJLD\admin)</UserName></UserRow>
          <UserRow><SecurityUser kind="admins" /><UserName>Administrators (DESKTOP-JGLLJLD\Administrators)</UserName></UserRow>
        </ListBox>
        <ActionRow $mt={7}>
          <ActionText>To change permissions, click Edit.</ActionText>
          <Btn $w={88}>Edit...</Btn>
        </ActionRow>
        <PermHead>
          <span>Permissions for SYSTEM</span>
          <span>Allow</span>
          <span>Deny</span>
        </PermHead>
        <ListBox $h={125} $mt={1} $pad="3px 0 0 0">
          {PERMS.map(([name, on]) => (
            <PermRow key={name}>
              <span>{name}</span>
              {on && <GreyCheck />}
            </PermRow>
          ))}
        </ListBox>
        <ActionRow $mt={8}>
          <ActionText>For special permissions or advanced settings,<br />click Advanced.</ActionText>
          <Btn $w={88}>Advanced</Btn>
        </ActionRow>
      </Panel>
      <DialogFoot>
        <Btn $primary>OK</Btn>
        <Btn>Cancel</Btn>
        <Btn $disabled>Apply</Btn>
      </DialogFoot>
    </Dialog>
  </Page>
);

export default App;
